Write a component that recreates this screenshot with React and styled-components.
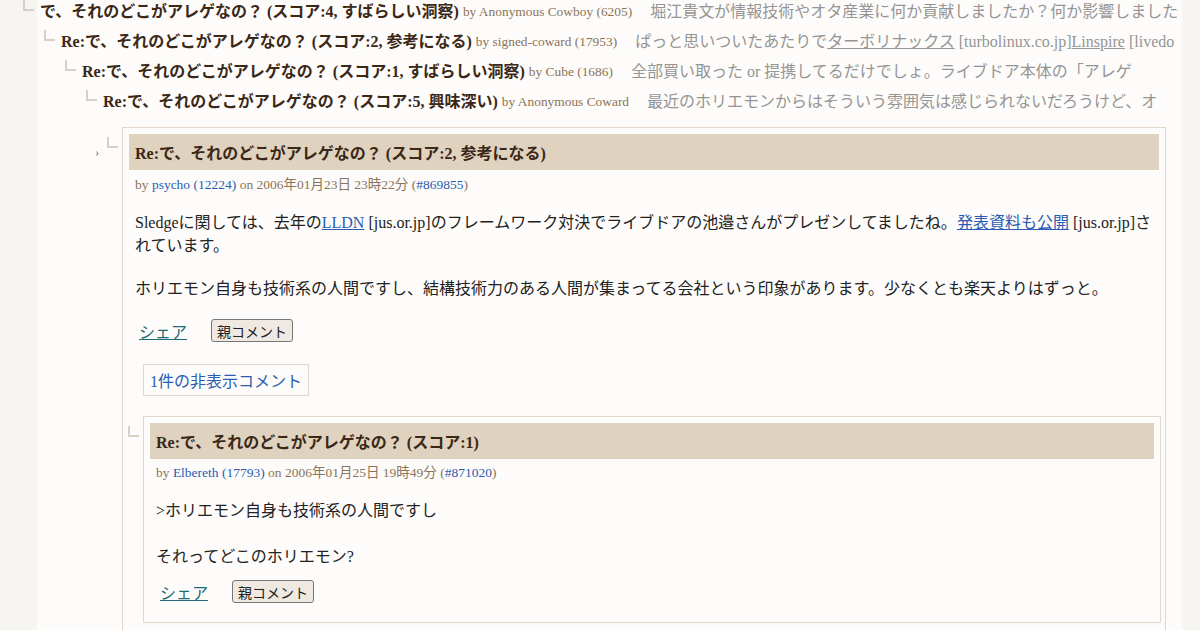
import React from 'react'
import styled, { createGlobalStyle } from 'styled-components'

const GlobalStyle = createGlobalStyle`
  html, body {
    margin: 0;
    overflow-x: hidden;
    background: #f7f5f1;
    font-family: "Liberation Serif", "Noto Sans CJK JP", serif;
  }
`

const Column = styled.div`
  margin-left: 37px;
  width: 1145px;
  min-height: 630px;
  background: #fdfcfa;
`

const Thread = styled.div`
  margin-left: -14px;
`

const Row = styled.div`
  display: flex;
  align-items: flex-start;
  height: 24px;
  margin-bottom: 6px;
  padding-left: ${p => p.$level * 21}px;
  white-space: nowrap;
  overflow: hidden;
`

const Connector = styled.span`
  flex: none;
  box-sizing: border-box;
  width: 11px;
  height: 11px;
  margin-top: ${p => p.$top || 0}px;
  margin-right: ${p => (p.$gap != null ? p.$gap : 6)}px;
  border-left: 2px solid #d8d0c5;
  border-bottom: 2px solid #d8d0c5;
`

const RowTitle = styled.span`
  line-height: 24px;
  font-size: 16px;
  font-weight: bold;
  color: #3a2716;
`

const RowBy = styled.span`
  line-height: 24px;
  font-size: 13.4px;
  color: #8b7357;
  margin-left: 4px;
`

const Summary = styled.span`
  line-height: 24px;
  font-size: 16px;
  color: #959595;
  margin-left: 18px;
  & u { text-decoration: underline; }
`

const Expanded = styled.div`
  display: flex;
  align-items: flex-start;
  margin-top: 13px;
  padding-left: 72px;
`

const Arrow = styled.span`
  flex: none;
  width: 12px;
  margin-top: 18px;
  font-size: 13px;
  line-height: 13px;
  color: #777;
`

const Box = styled.div`
  flex: 1;
  min-width: 0;
  border: 1px solid #e2d7ca;
  padding: 6px 6px ${p => p.$bottom || 6}px;
  margin-right: ${p => p.$right || 0}px;
`

const Header = styled.div`
  display: flex;
  align-items: center;
  height: 36px;
  padding: 0 6px;
  background: #dfd2bf;
  font-size: 16px;
  font-weight: bold;
  color: #3a2716;
  white-space: nowrap;
`

const Byline = styled.div`
  margin: ${p => p.$top}px 6px 0;
  font-size: 13.5px;
  line-height: 16px;
  color: #8b7357;
`

const BlueLink = styled.a`
  color: #2a5cb3;
  text-decoration: ${p => (p.$under ? 'underline' : 'none')};
  cursor: pointer;
`

const Body = styled.div`
  padding: 0 6px;
  color: #222;
  font-size: 16px;
  line-height: 23px;
  & p { margin: 18px 0 0; }
  & p + p { margin-top: ${p => p.$gap}px; }
`

const Actions = styled.div`
  display: flex;
  align-items: flex-start;
  gap: 24px;
  height: 23px;
  margin-top: ${p => p.$top}px;
  margin-bottom: ${p => p.$bottom || 0}px;
  padding-left: 10px;
`

const Share = styled.a`
  font-size: 16px;
  line-height: 28px;
  color: #1f6b73;
  text-decoration: underline;
  cursor: pointer;
`

const ParentButton = styled.button`
  box-sizing: border-box;
  height: 23px;
  padding: 0 5px;
  font-family: "Noto Sans CJK JP", sans-serif;
  font-size: 14px;
  line-height: 20px;
  color: #222;
  background: #efe9e1;
  border: 1px solid #777;
  border-radius: 3px;
`

const Hidden = styled.div`
  display: inline-flex;
  align-items: center;
  box-sizing: border-box;
  height: 32px;
  margin: 22px 0 0 14px;
  padding: 0 6px;
  border: 1px solid #e2d7ca;
  font-size: 16px;
  color: #2a5cb3;
`

const Nested = styled.div`
  display: flex;
  align-items: flex-start;
  margin: 20px -2px 0 -1px;
`

const rows = [
  {
    level: 0,
    title: 'で、それのどこがアレゲなの？ (スコア:4, すばらしい洞察)',
    by: 'by Anonymous Cowboy (6205)',
    summary: <>堀江貴文が情報技術やオタ産業に何か貢献しましたか？何か影響しました</>
  },
  {
    level: 1,
    title: 'Re:で、それのどこがアレゲなの？ (スコア:2, 参考になる)',
    by: 'by signed-coward (17953)',
    summary: <>ぱっと思いついたあたりで<u>ターボリナックス</u> [turbolinux.co.jp]<u>Linspire</u> [livedo</>
  },
  {
    level: 2,
    title: 'Re:で、それのどこがアレゲなの？ (スコア:1, すばらしい洞察)',
    by: 'by Cube (1686)',
    summary: <>全部買い取った or 提携してるだけでしょ。ライブドア本体の「アレゲ</>
  },
  {
    level: 3,
    title: 'Re:で、それのどこがアレゲなの？ (スコア:5, 興味深い)',
    by: 'by Anonymous Coward',
    summary: <>最近のホリエモンからはそういう雰囲気は感じられないだろうけど、オ</>
  }
]

const CommentByline = ({ user, date, id, top }) => (
  <Byline $top={top}>
    by <BlueLink>{user}</BlueLink> on {date} (<BlueLink>#{id}</BlueLink>)
  </Byline>
)

const App = () => (
  <>
    <GlobalStyle />
    <Column>
      <Thread>
        {rows.map(r => (
          <Row key={r.level} $level={r.level}>
            <Connector />
            <RowTitle>{r.title}</RowTitle>
            <RowBy>{r.by}</RowBy>
            <Summary>{r.summary}</Summary>
          </Row>
        ))}

        <Expanded>
          <Arrow>›</Arrow>
          <Connector $top={10} $gap={4} />
          <Box $right={16} $bottom={60}>
            <Header>Re:で、それのどこがアレゲなの？ (スコア:2, 参考になる)</Header>
            <CommentByline user="psycho (12224)" date="2006年01月23日 23時22分" id="869855" top={7} />
            <Body $gap={20}>
              <p>
                Sledgeに関しては、去年の<BlueLink $under>LLDN</BlueLink> [jus.or.jp]のフレームワーク対決でライブドアの池邉さんがプレゼンしてましたね。<BlueLink $under>発表資料も公開</BlueLink> [jus.or.jp]されています。
              </p>
              <p>ホリエモン自身も技術系の人間ですし、結構技術力のある人間が集まってる会社という印象があります。少なくとも楽天よりはずっと。</p>
            </Body>
            <Actions $top={19}>
              <Share>シェア</Share>
              <ParentButton>親コメント</ParentButton>
            </Actions>
            <Hidden>1件の非表示コメント</Hidden>

            <Nested>
              <Connector $top={10} $gap={4} />
              <Box>
                <Header>Re:で、それのどこがアレゲなの？ (スコア:1)</Header>
                <CommentByline user="Elbereth (17793)" date="2006年01月25日 19時49分" id="871020" top={6} />
                <Body $gap={23}>
                  <p>&gt;ホリエモン自身も技術系の人間ですし</p>
                  <p>それってどこのホリエモン?</p>
                </Body>
                <Actions $top={12} $bottom={13}>
                  <Share>シェア</Share>
                  <ParentButton>親コメント</ParentButton>
                </Actions>
              </Box>
            </Nested>
          </Box>
        </Expanded>
      </Thread>
    </Column>
  </>
)

export default App
